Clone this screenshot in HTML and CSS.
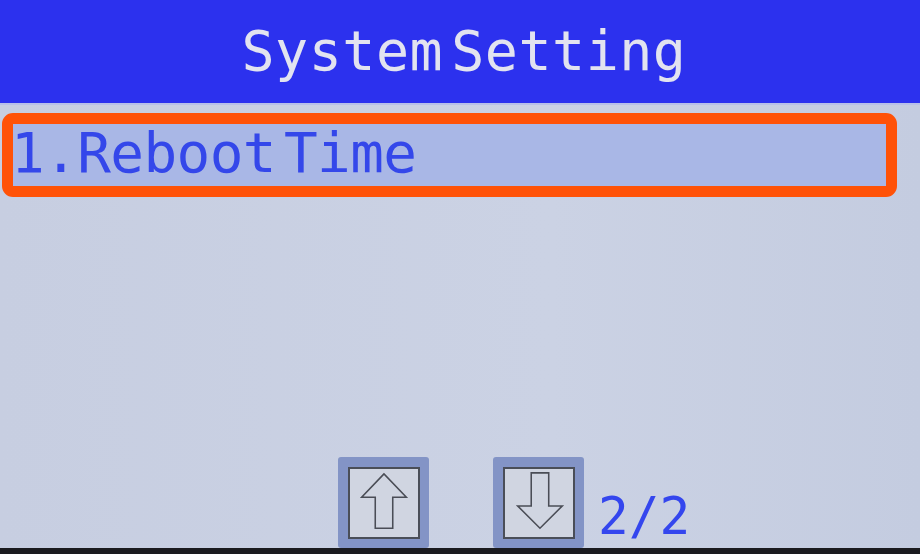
FILE: index.html
```html
<!DOCTYPE html>
<html>
<head>
<meta charset="utf-8">
<link rel="stylesheet" href="styles.css">
</head>
<body>
<div class="screen">
  <header class="header"><span class="title">System<span class="gap"></span>Setting</span></header>
  <main class="list">
    <div class="item selected"><span class="label">1.Reboot<span class="gap2"></span>Time</span></div>
  </main>
  <footer class="footer">
    <div class="btn">
      <div class="btn-inner">
        <svg width="70" height="70" viewBox="0 0 70 70"><polygon points="35,5 12,29 26,29 26,61 44,61 44,29 58,29" fill="none" stroke="#4a4d56" stroke-width="1.6" stroke-linejoin="miter"/></svg>
      </div>
    </div>
    <div class="btn btn-down">
      <div class="btn-inner">
        <svg width="70" height="70" viewBox="0 0 70 70"><polygon points="27,4 27,38 13,38 36,61 59,38 45,38 45,4" fill="none" stroke="#4a4d56" stroke-width="1.6" stroke-linejoin="miter"/></svg>
      </div>
    </div>
    <span class="page">2/2</span>
  </footer>
  <div class="bezel"></div>
</div>
</body>
</html>
```
FILE: styles.css
```css
html, body {
  margin: 0;
  padding: 0;
}
body {
  width: 920px;
  height: 554px;
  overflow: hidden;
  background: #c8cfe1;
}
.screen {
  width: 920px;
  height: 554px;
  display: flex;
  flex-direction: column;
  background: linear-gradient(90deg, #c7cee1 0%, #cbd2e4 60%, #c4cce0 100%);
}
.header {
  height: 105px;
  flex: none;
  background: #2c31ee;
  display: flex;
  justify-content: center;
  align-items: flex-start;
  border-bottom: 2px solid #b8c0e8;
  box-sizing: border-box;
}
.title {
  font-family: "DejaVu Sans Mono", monospace;
  font-size: 55px;
  line-height: 1;
  color: #e2e3f0;
  margin-top: 24px;
  margin-left: 8px;
  letter-spacing: 0.5px;
}
.gap { display: inline-block; width: 8px; }
.gap2 { display: inline-block; width: 8px; }
.list {
  flex: 1;
  padding: 8px 23px 0 2px;
}
.item {
  height: 84px;
  box-sizing: border-box;
  border: 11px solid #ff5208;
  border-radius: 11px;
  background: #a9b7e6;
  display: flex;
  align-items: center;
}
.label {
  font-family: "DejaVu Sans Mono", monospace;
  font-size: 56px;
  line-height: 1;
  color: #3447ea;
  margin-left: -2px;
  margin-top: -5px;
  letter-spacing: -0.6px;
}
.footer {
  height: 91px;
  flex: none;
  display: flex;
  align-items: flex-end;
  padding-left: 338px;
}
.btn {
  width: 91px;
  height: 91px;
  box-sizing: border-box;
  background: #8394c6;
  border-radius: 3px;
  padding: 10px 9px 9px 10px;
}
.btn-down {
  margin-left: 64px;
}
.btn-inner {
  width: 100%;
  height: 100%;
  box-sizing: border-box;
  border: 2px solid #4a4e58;
  background: #d0d5e1;
  display: flex;
  align-items: center;
  justify-content: center;
}
.btn-inner svg { display: block; }
.page {
  font-family: "DejaVu Sans Mono", monospace;
  font-size: 51px;
  line-height: 1;
  color: #3446ee;
  margin-left: 14px;
  margin-bottom: 6px;
  letter-spacing: 0px;
}
.bezel {
  height: 6px;
  flex: none;
  background: #1b1b1f;
}
```
